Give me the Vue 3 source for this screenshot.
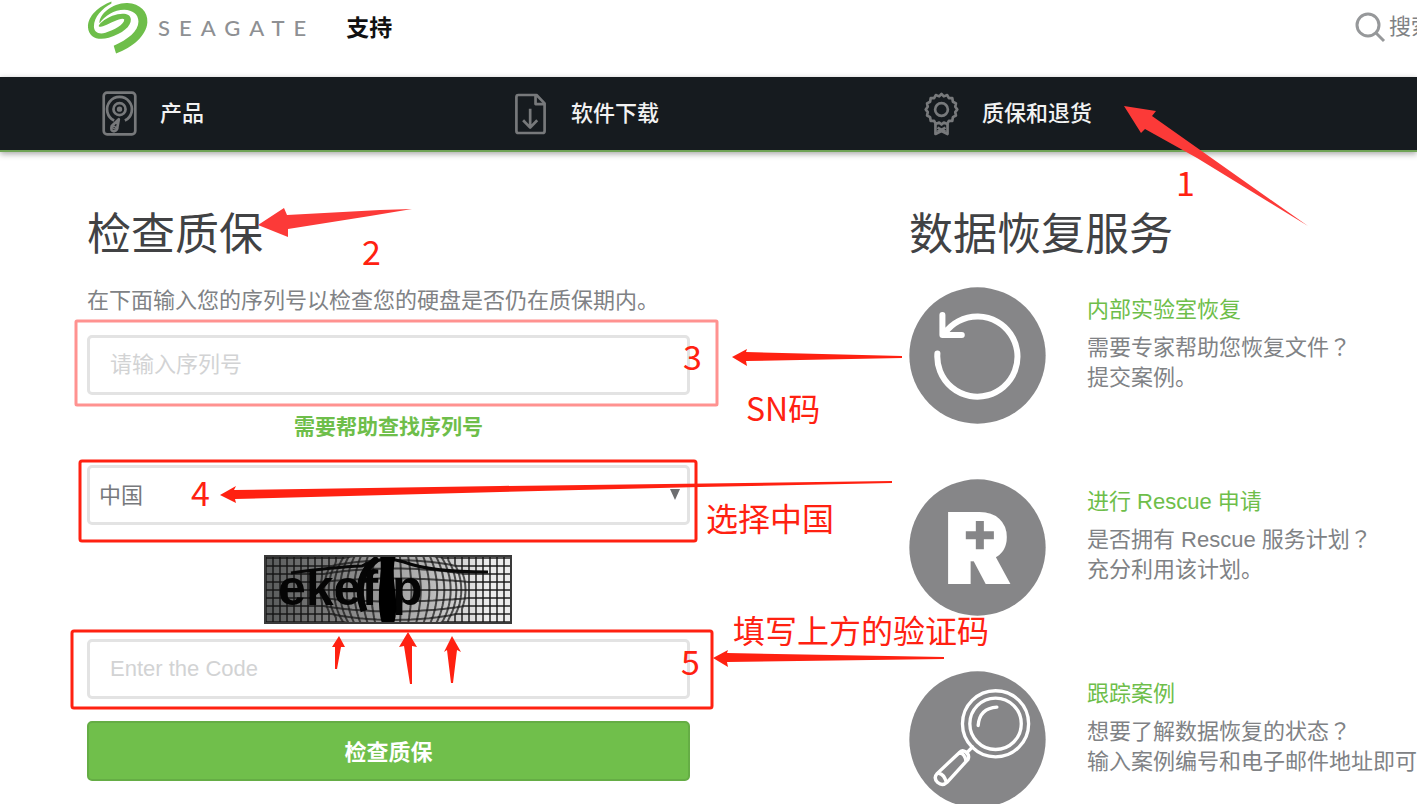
<script setup>
import { ref } from 'vue'

const serial = ref('')
const code = ref('')
const country = ref('CN')

const services = [
  { id: 'lab', title: '内部实验室恢复', ask: '需要专家帮助您恢复文件', note: '提交案例。', box: '32 18 410 410' },
  { id: 'rescue', title: '进行 Rescue 申请', ask: '是否拥有 Rescue 服务计划', note: '充分利用该计划。', box: '32 26 410 410' },
  { id: 'track', title: '跟踪案例', ask: '想要了解数据恢复的状态', note: '输入案例编号和电子邮件地址即可', box: '32 34 410 410' }
]

// Captcha mesh: lines bend away from the bulge around (130, 35)
const bulge = (x, y) => {
  const dx = x - 130
  const dy = y - 35
  const d = Math.sqrt(dx * dx + dy * dy * 3)
  const k = d < 75 ? 1 + 0.55 * (1 - d / 75) : 1
  return `${(130 + dx * k).toFixed(1)},${(35 + dy * k).toFixed(1)}`
}
const mesh = []
for (let x = 2; x < 248; x += 7) {
  const points = []
  for (let y = 0; y <= 69; y += 3) points.push(bulge(x, y))
  mesh.push(points.join(' '))
}
for (let y = 3; y < 69; y += 8) {
  const points = []
  for (let x = 0; x <= 248; x += 4) points.push(bulge(x, y))
  mesh.push(points.join(' '))
}

const softArrows = [
  '1124,106 1156,111 1152,116 1203,152 1308,226 1197,158 1145,129 1141,133',
  '258,225 284,208 287,215 380,210 412,209 370,216 288,229 288,237'
]
const arrows = [
  '732,357 747,349 746,352 902,356 902,358 746,361 747,366',
  '220,495 236,486 234,490 500,486 892,481 892,483 700,487 500,492 235,499 236,503',
  '713,658 728,650 727,653 944,657 944,659 727,662 728,667',
  '339,636 345,647 341,647 337,669 335,669 335,647 332,647',
  '408,632 417,647 412,646 412,684 410,684 404,646 399,647',
  '452,636 461,652 457,650 453,683 451,683 447,650 444,652'
]
const steps = [
  { n: 1, x: 1176, y: 196 },
  { n: 2, x: 362, y: 265 },
  { n: 3, x: 683, y: 370 },
  { n: 4, x: 191, y: 506 },
  { n: 5, x: 681, y: 675 }
]
const notes = [
  { text: 'SN码', x: 746, y: 421 },
  { text: '选择中国', x: 706, y: 531 },
  { text: '填写上方的验证码', x: 733, y: 643 }
]
</script>

<template>
  <div class="page">
    <header class="top">
      <a class="brand" href="#" aria-label="Seagate">
        <svg class="mark" viewBox="50 0 188 166" aria-hidden="true">
          <path d="M124 4C86 18 52 48 53 82C55 112 82 124 116 114C158 101 184 80 183 58C181 32 130 38 95 66C80 79 84 85 102 78C128 66 158 50 163 59C163 74 132 91 106 99C84 105 71 96 71 79C71 52 96 24 124 10Z" />
          <path d="M88 70C86 44 126 8 172 9C212 11 235 36 233 68C230 108 188 144 138 162L131 138C174 120 206 94 206 65C206 42 188 30 163 29C132 29 104 48 88 70Z" />
        </svg>
        <span class="wordmark">SEAGATE</span>
      </a>
      <a class="support" href="#">支持</a>
      <a class="search" href="#">
        <svg viewBox="0 0 34 34" aria-hidden="true">
          <circle cx="15" cy="15" r="11" />
          <path d="M23 23L31 31" />
        </svg>
        <span>搜索</span>
      </a>
    </header>

    <nav class="bar">
      <a class="item" href="#">
        <svg viewBox="96 276 104 134" aria-hidden="true">
          <rect x="101" y="281" width="94" height="124" rx="10" />
          <path d="M132 364A37 37 0 1 1 164 364" />
          <circle cx="148" cy="330" r="18" />
          <circle cx="148" cy="330" r="4" />
          <path d="M146 360L125 380Q120 396 132 396Q142 394 142 382Z" />
          <circle cx="132" cy="385" r="2" />
        </svg>
        <span>产品</span>
      </a>
      <a class="item" href="#">
        <svg viewBox="38 35 104 134" aria-hidden="true">
          <path d="M54 47H108L132 72V154Q132 160 126 160H54Q48 160 48 154V53Q48 47 54 47Z" />
          <path d="M105 48V74H132M89 88V144M68 122L89 144L110 122" />
        </svg>
        <span>软件下载</span>
      </a>
      <a class="item" href="#">
        <svg viewBox="74 37 104 134" aria-hidden="true">
          <path d="M126 46L133 53L143 49L148 58L158 58L160 69L169 74L167 84L173 92L167 100L169 110L160 115L158 126L148 126L143 135L133 131L126 137L119 131L109 135L104 126L94 126L92 115L83 110L85 100L79 92L85 84L83 74L92 69L94 58L104 58L109 49L119 53Z" />
          <circle cx="126" cy="92" r="19" />
          <path d="M108 134V165L126 156L144 165V134M114 146L138 158M138 146L114 158" />
        </svg>
        <span>质保和退货</span>
      </a>
    </nav>

    <main class="content">
      <form class="check" @submit.prevent>
        <h1>检查质保</h1>
        <label class="lead" for="serial">在下面输入您的序列号以检查您的硬盘是否仍在质保期内。</label>
        <input id="serial" v-model="serial" class="field" type="text" placeholder="请输入序列号" />
        <a class="help" href="#">需要帮助查找序列号</a>
        <div class="select">
          <select v-model="country" class="field" aria-label="国家">
            <option value="CN">中国</option>
          </select>
          <svg class="caret" viewBox="0 0 10 11" aria-hidden="true"><path d="M0 0H10L5 11Z" /></svg>
        </div>
        <svg class="captcha" viewBox="0 0 248 69" role="img" aria-label="captcha">
          <defs>
            <linearGradient id="shade">
              <stop offset="0" stop-color="#585a5a" />
              <stop offset="0.3" stop-color="#808080" />
              <stop offset="0.65" stop-color="#b4b4b4" />
              <stop offset="0.9" stop-color="#ececec" />
            </linearGradient>
          </defs>
          <rect width="248" height="69" fill="url(#shade)" />
          <polyline v-for="(line, i) in mesh" :key="i" class="mesh" :points="line" />
          <path class="swash" d="M27 18Q70 12 98 11Q118 0 140 7Q166 17 224 17" />
          <path class="hook" d="M100 56Q88 22 114 3" />
          <text x="14" y="50">ekefip</text>
          <path d="M116 0H132Q128 12 131 35Q134 55 130 69H118Q114 55 115 35Q118 12 116 0Z" />
          <rect class="frame" x="1" y="1" width="246" height="67" />
        </svg>
        <input v-model="code" class="field" type="text" placeholder="Enter the Code" aria-label="Enter the Code" />
        <button class="submit" type="submit">检查质保</button>
      </form>

      <section class="recovery">
        <h2>数据恢复服务</h2>
        <article v-for="s in services" :key="s.id" class="service">
          <svg class="disc" :viewBox="s.box" aria-hidden="true">
            <template v-if="s.id === 'lab'">
              <circle class="plate" cx="237" cy="223" r="204" />
              <path class="reload" d="M117 217A120 120 0 1 0 140 155M132 102V162H190" />
            </template>
            <template v-else-if="s.id === 'rescue'">
              <circle class="plate" cx="237" cy="231" r="204" />
              <text class="letter" x="142" y="333">R</text>
              <rect class="fill" x="190" y="146" width="112" height="104" />
              <path class="plus" d="M244 152V236M202 194H286" />
            </template>
            <template v-else>
              <circle class="plate" cx="237" cy="239" r="204" />
              <g class="lens">
                <circle cx="291" cy="192" r="99" />
                <circle cx="291" cy="192" r="77" />
                <path d="M239 197Q243 145 295 142" />
                <path d="M222 261L207 277" />
                <path d="M183 278Q190 268 202 276Q214 286 209 298L146 367Q132 380 118 368Q104 354 116 341ZM183 278Q200 282 202 303M121 340Q137 343 143 366" />
              </g>
            </template>
          </svg>
          <div class="text">
            <h3><a href="#">{{ s.title }}</a></h3>
            <p>{{ s.ask }}<span class="query">？</span><br />{{ s.note }}</p>
          </div>
        </article>
      </section>
    </main>

    <svg class="notes">
      <rect class="pale" x="76" y="321" width="641" height="84" rx="1" />
      <rect class="box" x="80" y="461" width="616" height="80" rx="2" />
      <rect class="box" x="72" y="631" width="640" height="77" rx="2" />
      <polygon v-for="p in softArrows" :key="p" class="soft" :points="p" />
      <polygon v-for="p in arrows" :key="p" :points="p" />
      <text v-for="s in steps" :key="s.n" class="step" :x="s.x" :y="s.y">{{ s.n }}</text>
      <text v-for="n in notes" :key="n.text" :x="n.x" :y="n.y">{{ n.text }}</text>
    </svg>
  </div>
</template>

<style>
html {
  scrollbar-width: none;
}
body {
  margin: 0;
  background: #fff;
}
</style>

<style scoped>
.page {
  position: relative;
  min-height: 100vh;
  overflow: hidden;
  font-family: "Liberation Sans", "Noto Sans CJK SC", sans-serif;
  font-size: 22px;
  line-height: 30px;
  color: #808285;
}
a {
  color: inherit;
  text-decoration: none;
}
.top {
  display: flex;
  align-items: center;
  height: 77px;
  padding-left: 87px;
}
.brand {
  display: flex;
  align-items: center;
  gap: 9px;
  margin-bottom: 22px;
}
.mark {
  width: 62px;
  height: 55px;
  fill: #6ebe4a;
}
.wordmark {
  font-family: Lato, sans-serif;
  font-size: 22px;
  font-weight: 500;
  letter-spacing: 9px;
  color: #8e9093;
}
.support {
  margin: 0 auto 22px 31px;
  font-size: 23px;
  font-weight: 700;
  color: #111;
}
.search {
  display: flex;
  align-items: center;
  gap: 2px;
  margin: 0 -16px 24px 0;
  white-space: nowrap;
}
.search svg {
  width: 34px;
  height: 34px;
  fill: none;
  stroke: #96989a;
  stroke-width: 3;
}
.bar {
  position: relative;
  display: grid;
  grid-template-columns: 411fr 411fr 507fr;
  height: 73px;
  padding-left: 88px;
  background: #161b1f;
  border-bottom: 2px solid #6fa356;
  box-shadow: 0 2px 6px rgba(0, 0, 0, 0.35);
}
.item {
  display: flex;
  align-items: center;
  gap: 23px;
  padding-left: 14px;
  font-weight: 500;
  color: #f2f2f2;
}
.item svg {
  width: 35px;
  height: 45px;
  fill: none;
  stroke: #77797b;
  stroke-width: 8;
  stroke-linejoin: round;
}
.content {
  display: grid;
  grid-template-columns: 604fr 507fr;
  column-gap: 219px;
  padding: 53px 0 0 87px;
}
.check {
  display: flex;
  flex-direction: column;
}
h1,
h2 {
  margin: 0;
  font-size: 44px;
  font-weight: 400;
  line-height: 60px;
  color: #414244;
  white-space: nowrap;
}
.lead {
  margin: 21px 0 19px;
  white-space: nowrap;
}
.field {
  box-sizing: border-box;
  width: 100%;
  height: 60px;
  padding: 0 20px;
  border: 3px solid #e3e3e3;
  border-radius: 5px;
  background: #fff;
  font: inherit;
  color: #77797c;
}
.field::placeholder {
  color: #d2d3d4;
}
.help {
  align-self: center;
  margin: 17px 0 23px;
  font-size: 21px;
  font-weight: 700;
  color: #6ebe4a;
}
.select {
  position: relative;
  height: 60px;
}
.select .field {
  appearance: none;
  padding: 2px 9px 0;
}
.caret {
  position: absolute;
  top: 24px;
  right: 10px;
  width: 10px;
  height: 11px;
  fill: #6d6e70;
}
.captcha {
  align-self: center;
  width: 248px;
  height: 69px;
  margin: 30px 0 15px;
}
.captcha text {
  font-size: 50px;
  font-weight: 700;
  fill: #050505;
}
.mesh {
  fill: none;
  stroke: #141414;
  stroke-width: 2;
  stroke-opacity: 0.7;
}
.swash {
  fill: none;
  stroke: #080808;
  stroke-width: 3;
}
.hook {
  fill: none;
  stroke: #050505;
  stroke-width: 7;
}
.frame {
  fill: none;
  stroke: #3a3a3a;
  stroke-width: 2;
}
.submit {
  height: 60px;
  margin-top: 22px;
  padding: 4px 0 0;
  border: 2px solid #65ad45;
  border-radius: 5px;
  background: #70bf4b;
  font: inherit;
  font-weight: 700;
  color: #fff;
}
.recovery {
  display: flex;
  flex-direction: column;
}
.service {
  display: flex;
  gap: 41px;
  margin-bottom: 55px;
}
h2 + .service {
  margin-top: 22px;
}
.service:last-child {
  margin-bottom: 0;
}
.disc {
  flex: none;
  width: 137px;
  height: 137px;
}
.text {
  padding-top: 8px;
  white-space: nowrap;
}
h3 {
  margin: 0 0 8px;
  font-size: 22px;
  font-weight: 400;
  color: #6ebe4a;
}
p {
  margin: 0;
}
.query {
  font-family: "Noto Sans CJK TC", sans-serif;
  line-height: 1;
}
.plate {
  fill: #868688;
}
.reload {
  fill: none;
  stroke: #fff;
  stroke-width: 18;
  stroke-linecap: round;
  stroke-linejoin: round;
}
.letter {
  font-family: Inter, sans-serif;
  font-size: 280px;
  font-weight: 900;
  fill: #fff;
  stroke: #fff;
  stroke-width: 12;
}
.fill {
  fill: #fff;
}
.plus {
  stroke: #868688;
  stroke-width: 24;
}
.lens {
  fill: none;
  stroke: #fff;
  stroke-width: 10;
  stroke-linecap: round;
}
.notes {
  position: absolute;
  inset: 0;
  width: 100%;
  height: 100%;
  overflow: visible;
  pointer-events: none;
  fill: #ff2111;
  font-family: "Noto Sans CJK SC", sans-serif;
  font-size: 32px;
}
.notes .step {
  font-size: 34px;
}
.notes .soft {
  fill: #fc3a38;
}
.pale {
  fill: none;
  stroke: #ff9290;
  stroke-width: 3;
}
.box {
  fill: none;
  stroke: #ff2111;
  stroke-width: 3;
}
</style>
